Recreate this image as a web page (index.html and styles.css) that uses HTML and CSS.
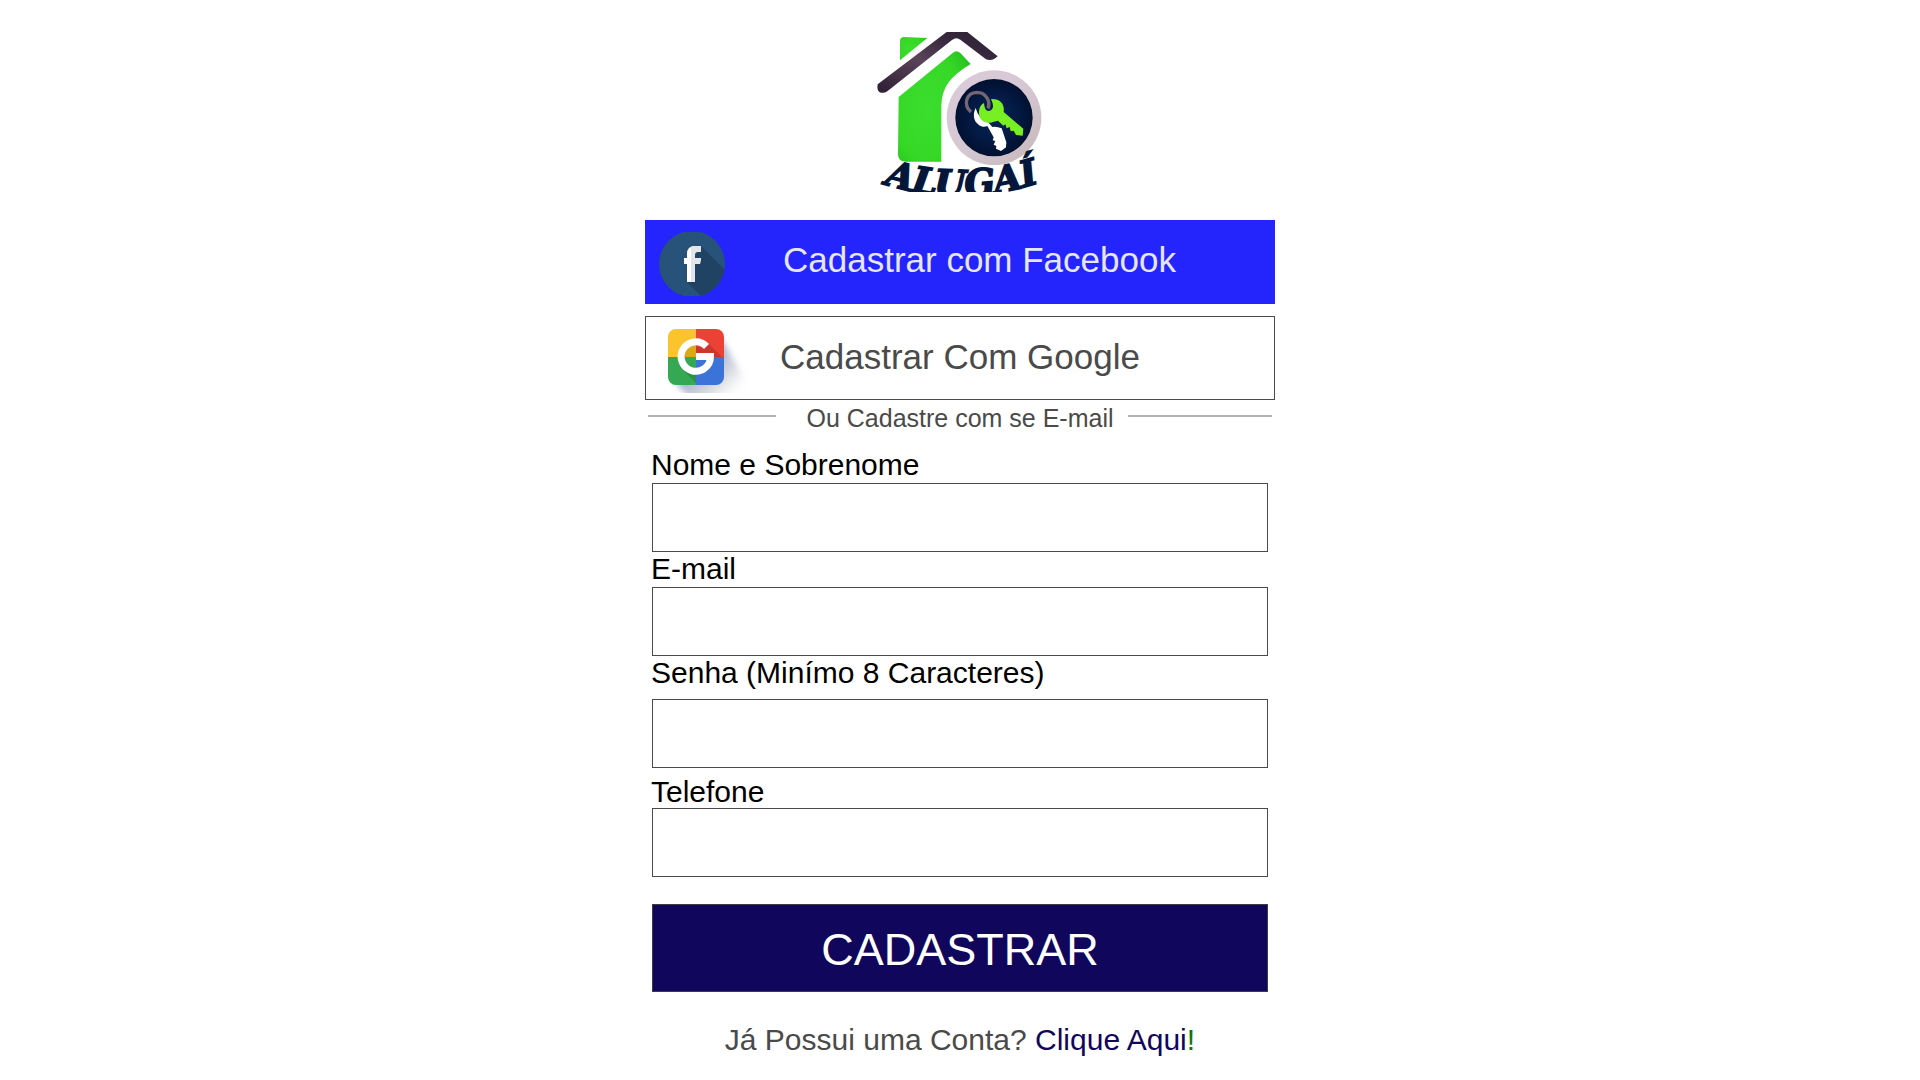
FILE: index.html
```html
<!DOCTYPE html>
<html lang="pt-BR">
<head>
<meta charset="utf-8">
<meta name="viewport" content="width=device-width, initial-scale=1">
<title>Alugaí - Cadastro</title>
<link rel="stylesheet" href="styles.css">
</head>
<body>
<main class="signup">
  <svg class="logo" viewBox="45 36 510 480" role="img" aria-label="Alugaí">
    <defs>
      <linearGradient id="roof" x1="0" y1="1" x2="1" y2="0">
        <stop offset="0" stop-color="#2d1d33"/><stop offset=".45" stop-color="#5a4459"/><stop offset=".7" stop-color="#3a2a40"/><stop offset="1" stop-color="#2b2030"/>
      </linearGradient>
      <radialGradient id="wall" cx=".4" cy=".5" r=".8">
        <stop offset="0" stop-color="#3ade2c"/><stop offset=".6" stop-color="#36d826"/><stop offset="1" stop-color="#20b91c"/>
      </radialGradient>
      <linearGradient id="ring" x1="0" y1="0" x2="1" y2="1">
        <stop offset="0" stop-color="#dccbdc"/><stop offset=".5" stop-color="#d6c8d2"/><stop offset="1" stop-color="#c4b6b8"/>
      </linearGradient>
      <radialGradient id="disc">
        <stop offset="0" stop-color="#052452"/><stop offset=".6" stop-color="#031a45"/><stop offset="1" stop-color="#01102f"/>
      </radialGradient>
      <path id="curve" d="M72 492Q310 570 570 478"/>
    </defs>
    <path fill="url(#wall)" d="M120 62Q121 51 132 51L202 54L120 121Z"/>
    <path fill="url(#wall)" d="M116 231L278 99Q290 89 301 99L332 132Q288 158 266 187Q244 217 244 258V425H136Q114 424 114 402Z"/>
    <path fill="url(#roof)" d="M53 193L260 36H322L413 109Q398 125 378 118L302 60Q289 50 276 60L82 214Q70 222 58 216Q50 210 53 193Z"/>
    <circle cx="402" cy="293" r="142" fill="url(#ring)"/>
    <circle cx="402" cy="293" r="116" fill="url(#disc)"/>
    <path fill="#fff" d="M347 264C336 285 341 312 368 320Q376 321 382 318L401 352L398 361L406 363L401 374L409 378L408 386L423 393L438 382L439 367L425 325Q410 319 397 321L384 306Q355 296 347 264Z"/>
    <path fill="#77ef23" d="M357 272C354 300 376 315 399 306L414 302L430 317L436 313L440 325L449 321L452 334L461 332L468 345L488 347L490 326L431 276C434 255 424 236 393 237Q405 262 394 270Q374 281 372 249Q359 256 357 272Z"/>
    <path fill="none" stroke="#746674" stroke-width="10" d="M333 276C310 257 316 218 351 217C379 217 392 246 384 265"/>
    <text class="logo-name"><textPath href="#curve">ALUGAÍ</textPath></text>
  </svg>

  <div class="social">
    <button class="social-button social-facebook" type="button">
      <svg class="social-icon" viewBox="0 0 96 78" aria-hidden="true">
        <defs>
          <clipPath id="fb-clip"><path d="M25 11H41A33 33 0 0 1 41 75H25A33 33 0 0 1 25 11Z"/></clipPath>
        </defs>
        <g clip-path="url(#fb-clip)">
          <path fill="#27537a" d="M0 11H66V75H0Z"/>
          <path fill="#204263" d="M42 25L70 53V80H47L28 61L34 40Z"/>
        </g>
        <path fill="#fff" d="M28 61V43H25V37H28V33Q28 25 36 25H42V31H38Q36 31 36 33V37H42L41 43H36V61Z"/>
        <path fill="#e3e5e8" d="M32 61V26Q34 25 36 25H42V31H38Q36 31 36 33V37H42L41 43H36V61Z"/>
      </svg>
      <span>Cadastrar com Facebook</span>
    </button>
    <button class="social-button social-google" type="button">
      <svg class="social-icon" viewBox="0 0 96 78" aria-hidden="true">
        <defs>
          <clipPath id="g-clip"><rect x="9" y="11" width="56" height="56" rx="8"/></clipPath>
          <clipPath id="g-shade"><path d="M0 0H96V75H0Z"/></clipPath>
          <linearGradient id="g-shadow" gradientUnits="userSpaceOnUse" x1="44" y1="46" x2="74" y2="78">
            <stop offset="0" stop-color="#8f9fc5" stop-opacity=".8"/><stop offset=".5" stop-color="#a8afc2" stop-opacity=".5"/><stop offset="1" stop-color="#ccc" stop-opacity="0"/>
          </linearGradient>
          <filter id="soft" x="-20%" y="-20%" width="140%" height="140%"><feGaussianBlur stdDeviation="3"/></filter>
        </defs>
        <g clip-path="url(#g-shade)"><path fill="url(#g-shadow)" filter="url(#soft)" d="M63 22L92 72V84H34L16 64Z"/></g>
        <g clip-path="url(#g-clip)">
          <path fill="#fbc42d" d="M9 11H37V39H9Z"/>
          <path fill="#ea4335" d="M37 11H65V39H37Z"/>
          <path fill="#34a853" d="M9 39H37V67H9Z"/>
          <path fill="#3b73d9" d="M37 39H65V67H37Z"/>
          <path fill="#dba916" d="M37 26A13 13 0 0 0 25 39H37Z"/>
          <path fill="#c9372d" d="M50 26L63 39H37V28L45 31Z"/>
          <path fill="#2c9147" d="M24 52L37 65V55Z"/>
        </g>
        <path fill="none" stroke="#fff" stroke-width="7" d="M47.500 28.500A14.700 14.700 0 1 0 51.500 38.500H37"/>
      </svg>
      <span>Cadastrar Com Google</span>
    </button>
  </div>

  <p class="divider"><span>Ou Cadastre com se E-mail</span></p>

  <form class="form">
    <div class="field">
      <label for="name">Nome e Sobrenome</label>
      <input id="name" type="text">
    </div>
    <div class="field">
      <label for="email">E-mail</label>
      <input id="email" type="email">
    </div>
    <div class="field field-password">
      <label for="password">Senha (Minímo 8 Caracteres)</label>
      <input id="password" type="password" minlength="8">
    </div>
    <div class="field field-phone">
      <label for="phone">Telefone</label>
      <input id="phone" type="tel">
    </div>
    <button class="submit" type="submit">CADASTRAR</button>
  </form>

  <p class="login">Já Possui uma Conta? <a href="#">Clique Aqui</a><span class="mark">!</span></p>
</main>
</body>
</html>
```
FILE: styles.css
```css
* {
  box-sizing: border-box;
}

body {
  margin: 0;
  background: #fff;
  color: #000;
  font-family: "Liberation Sans", Arial, sans-serif;
}

button,
input {
  font-family: inherit;
}

.signup {
  display: flex;
  flex-direction: column;
  width: 100%;
  max-width: 630px;
  margin: 0 auto;
  padding: 32px 0 16px;
}

.logo {
  align-self: center;
  width: 170px;
  height: 160px;
}

.logo-name {
  fill: #04173a;
  stroke: #04173a;
  stroke-width: 5px;
  font-family: "DejaVu Serif", serif;
  font-size: 108px;
  font-style: italic;
  font-weight: bold;
}

.social {
  display: grid;
  gap: 12px;
  margin-top: 28px;
}

.social-button {
  display: flex;
  align-items: center;
  height: 84px;
  padding: 0 13px;
  border: 1px solid;
  font-size: 35px;
  line-height: 40px;
  text-align: left;
  cursor: pointer;
}

.social-icon {
  flex: none;
  width: 96px;
  height: 78px;
}

.social-facebook {
  gap: 28px;
  padding-bottom: 4px;
  border-color: #2424fc;
  background: #2424fc;
  color: #e6e6fa;
}

.social-google {
  gap: 25px;
  padding-bottom: 2px;
  border-color: #4a4a4a;
  background: #fff;
  color: #4a4a4a;
}

.divider {
  display: flex;
  align-items: center;
  margin: 4px 3px 0;
  color: #4a4a4a;
  font-size: 25px;
  line-height: 28px;
}

.divider::before,
.divider::after {
  content: "";
  width: 128px;
  height: 2px;
  margin-bottom: 4px;
  background: #b2b2b2;
}

.divider::after {
  width: 144px;
}

.divider span {
  flex: 1;
  padding-left: 16px;
  text-align: center;
}

.form {
  display: flex;
  flex-direction: column;
  margin-top: 16px;
  padding: 0 7px;
}

.field {
  display: flex;
  flex-direction: column;
  gap: 2px;
}

.field label {
  margin-left: -1px;
  font-size: 30px;
  line-height: 33px;
}

.field input {
  width: 100%;
  height: 69px;
  padding: 0 16px;
  border: 1px solid #4a4a4a;
  border-radius: 0;
  background: #fff;
  font-size: 30px;
}

.field-password {
  gap: 10px;
}

.field-phone {
  gap: 0;
  padding-top: 7px;
}

.submit {
  height: 88px;
  margin-top: 27px;
  padding: 4px 0 0;
  border: 1px solid #3c3c4a;
  background: #10065c;
  color: #fff;
  font-size: 45px;
  cursor: pointer;
}

.login {
  margin: 31px 0 0;
  color: #4a4a4a;
  font-size: 30px;
  line-height: 34px;
  text-align: center;
}

.login a {
  color: #10065c;
  text-decoration: none;
}

.mark {
  color: #0a780a;
}
```
